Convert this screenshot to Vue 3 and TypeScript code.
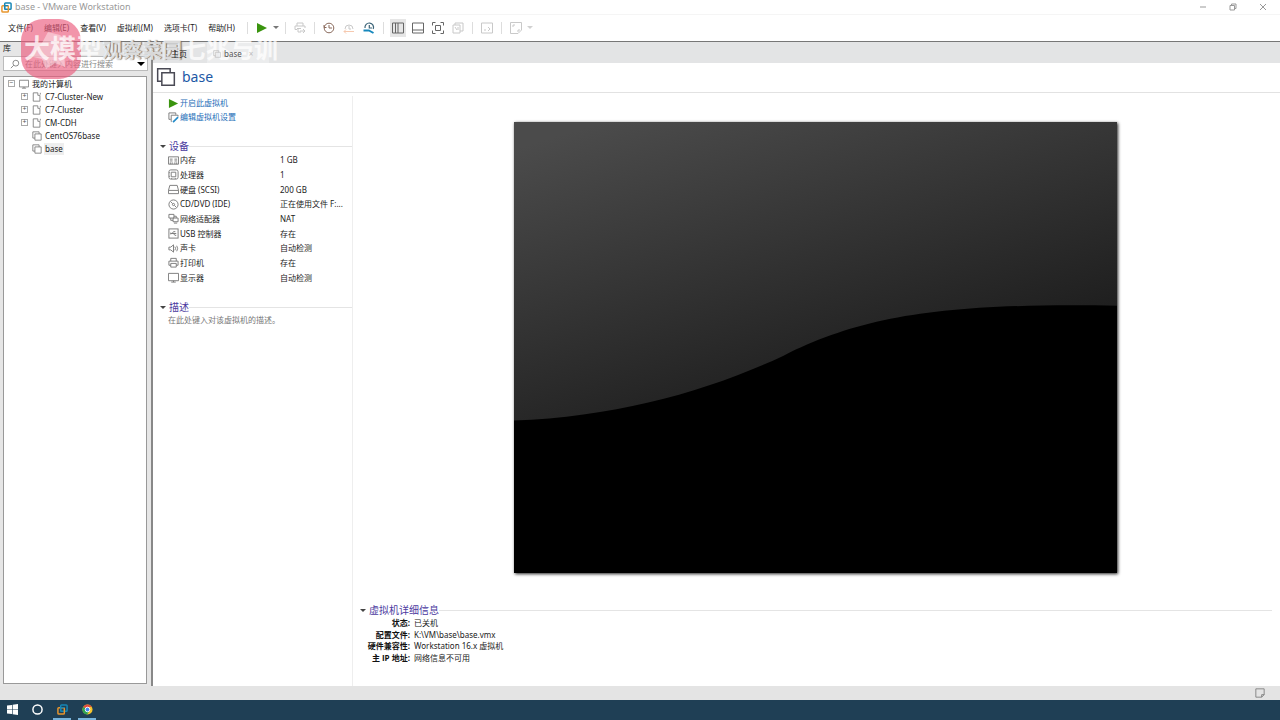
<script setup lang="ts">
import { ref } from 'vue'

interface Device { icon: string; name: string; value: string }
interface Node { name: string; icon: string; folder: boolean }

const menus: string[] = ['文件(F)', '编辑(E)', '查看(V)', '虚拟机(M)', '选项卡(T)', '帮助(H)']
const nodes: Node[] = [
  { name: 'C7-Cluster-New', icon: 'folder', folder: true },
  { name: 'C7-Cluster', icon: 'folder', folder: true },
  { name: 'CM-CDH', icon: 'folder', folder: true },
  { name: 'CentOS76base', icon: 'vm', folder: false },
  { name: 'base', icon: 'vm', folder: false },
]
const devices: Device[] = [
  { icon: 'memory', name: '内存', value: '1 GB' },
  { icon: 'cpu', name: '处理器', value: '1' },
  { icon: 'disk', name: '硬盘 (SCSI)', value: '200 GB' },
  { icon: 'cd', name: 'CD/DVD (IDE)', value: '正在使用文件 F:...' },
  { icon: 'net', name: '网络适配器', value: 'NAT' },
  { icon: 'usb', name: 'USB 控制器', value: '存在' },
  { icon: 'sound', name: '声卡', value: '自动检测' },
  { icon: 'printer', name: '打印机', value: '存在' },
  { icon: 'monitor', name: '显示器', value: '自动检测' },
]
const details: [string, string][] = [
  ['状态:', '已关机'],
  ['配置文件:', 'K:\\VM\\base\\base.vmx'],
  ['硬件兼容性:', 'Workstation 16.x 虚拟机'],
  ['主 IP 地址:', '网络信息不可用'],
]
const selected = ref('base')
const query = ref('')
</script>

<template>
  <div class="desktop">
    <svg class="defs" aria-hidden="true">
      <symbol id="logo" viewBox="0 0 12 12"><rect x="4" y="1" width="7" height="7" rx="1" fill="none" stroke="#1686b5" stroke-width="1.6" /><rect x="1" y="4" width="7" height="7" rx="1" fill="none" stroke="#e8962e" stroke-width="1.6" /><path d="M4 8V4h4" fill="none" stroke="#1686b5" stroke-width="1.4" /></symbol>
      <symbol id="vm" viewBox="0 0 12 12"><path d="M3.500 8.500H1V1H8.500V3.500M3.500 3.500H11V11H3.500Z" /></symbol>
      <symbol id="folder" viewBox="0 0 12 12"><path d="M7 1H1.500V11H9.500V4M7 1V4H9.500M10 1V3" /></symbol>
      <symbol id="monitor" viewBox="0 0 12 12"><path d="M.5 1.500H11.500V9.500H.5ZM3.500 11H8.500M6 9.500V11" /></symbol>
      <symbol id="memory" viewBox="0 0 12 12"><path d="M.5 2H11.500V10H.5ZM2 4.500H5M7 4.500H10M2 6.500H5M7 6.500H10M2.500 8V10M4.500 8V10M7.500 8V10M9.500 8V10" /></symbol>
      <symbol id="cpu" viewBox="0 0 12 12"><rect x="1" y="1" width="10" height="10" rx="2" /><path d="M3.500 3.500H8.500V8.500H3.500ZM1 4H2M1 8H2M4 10V11M8 10V11" /></symbol>
      <symbol id="disk" viewBox="0 0 12 12"><path d="M.5 7L2 1.500H10L11.500 7V10.500H.5ZM.5 7H11.500" /></symbol>
      <symbol id="cd" viewBox="0 0 12 12"><circle cx="6" cy="6" r="5" /><circle cx="6" cy="6" r="1.200" /><path d="M3 3L5 5M7 7L9 9" /></symbol>
      <symbol id="net" viewBox="0 0 12 12"><path d="M1 1.500H6.500V5.500H1ZM5.500 5.500H11V9.500H5.500ZM3 5.500V8H5.500M6.500 3.500H9V5.500M6.500 11H10" /></symbol>
      <symbol id="usb" viewBox="0 0 12 12"><rect x="1" y="1" width="10" height="10" /><path d="M3 6H9M4.500 6L6 4H8M6 6L7.500 8H9M3 5V7" /></symbol>
      <symbol id="sound" viewBox="0 0 12 12"><path d="M1 4.500H3L6 2V10L3 7.500H1ZM7.500 4Q9 6 7.500 8M9.500 3Q11.500 6 9.500 9" /></symbol>
      <symbol id="printer" viewBox="0 0 12 12"><path d="M3 4.500V1.500H9V4.500M3 9H1V4.500H11V9H9M3 7H9V11H3Z" /></symbol>
      <symbol id="edit" viewBox="0 0 12 12"><path d="M3 8H1V1H8.500V3M4 10.500H3.500V3.500H11V5" /><path d="M5.500 11L11 5.500" stroke="#238bc8" stroke-width="1.800" /></symbol>
      <symbol id="play" viewBox="0 0 12 12"><path d="M1 1L11 6L1 11Z" fill="#3a940f" stroke="none" /></symbol>
      <symbol id="clock" viewBox="0 0 12 12"><circle cx="6" cy="6" r="4.800" /><path d="M6 3V6H9M1 3V5.500H3.500" /></symbol>
      <symbol id="send" viewBox="0 0 12 12"><path d="M3 4V1H9V4M3 7.500H1V4H11V6M3 6.500H7M4 6.500V10H7M6 9H11M9 7L11 9L9 11" /></symbol>
      <symbol id="revert" viewBox="0 0 12 12"><path d="M2 7A4 4 0 0 1 10 7M6 4V7H8" /><path d="M1 9.500H11M3 7.500L1 9.500L3 11.500" stroke="#e8661c" /></symbol>
      <symbol id="manage" viewBox="0 0 12 12"><path d="M2 6A4.300 4.300 0 1 1 10.200 7M6.300 3V6H9" stroke="#3c6478" stroke-width="1.200" /><path d="M.5 8.500H6.500M6 8.500L10.500 11" stroke="#1688bd" stroke-width="2" /></symbol>
      <symbol id="sidebar" viewBox="0 0 12 12"><path d="M.5 1H11.500V11H.5ZM3.500 1V11M6 1V11" /></symbol>
      <symbol id="bottom" viewBox="0 0 12 12"><path d="M.5 1H11.500V11H.5ZM.5 8H11.500" /></symbol>
      <symbol id="full" viewBox="0 0 12 12"><path d="M3.500 3.500H8.500V8.500H3.500ZM.5 3.500V.5H3.500M8.500.5H11.500V3.500M11.500 8.500V11.500H8.500M3.500 11.500H.5V8.500" /></symbol>
      <symbol id="unity" viewBox="0 0 12 12"><path d="M1 3H8V11H1ZM3 3V1H11V9H8M3 5L5 8M6 5V8" /></symbol>
      <symbol id="console" viewBox="0 0 12 12"><path d="M.5 1H11.500V11H.5ZM3 8H5M7 5L9 7L7 9" /></symbol>
      <symbol id="stretch" viewBox="0 0 12 12"><path d="M8 11.500H.5V.5H11.500V8M3 5V3H5M7 9H9V7M8 11.500L11.500 8" /></symbol>
    </svg>
    <header class="title">
      <svg><use href="#logo" /></svg><span>base - VMware Workstation</span>
      <div class="window-buttons">
        <button aria-label="最小化"><svg viewBox="0 0 8 8"><path d="M1 4H7" /></svg></button>
        <button aria-label="还原"><svg viewBox="0 0 8 8"><path d="M1 2.500H5.500V7H1ZM2.500 2.500V1H7V5.500H5.500" /></svg></button>
        <button aria-label="关闭"><svg viewBox="0 0 8 8"><path d="M1 1L7 7M7 1L1 7" /></svg></button>
      </div>
    </header>
    <div class="menubar">
      <nav><button v-for="m in menus" :key="m">{{ m }}</button></nav>
      <div class="tools">
        <i></i><button aria-label="开启"><svg><use href="#play" /></svg></button><b></b>
        <i></i><button class="faint" aria-label="发送"><svg><use href="#send" /></svg></button>
        <i></i><button aria-label="拍摄快照" class="snap"><svg><use href="#clock" /></svg></button><button class="faint" aria-label="恢复快照"><svg><use href="#revert" /></svg></button><button aria-label="管理快照"><svg><use href="#manage" /></svg></button>
        <i></i><button class="active" aria-label="库"><svg><use href="#sidebar" /></svg></button><button aria-label="缩略图"><svg><use href="#bottom" /></svg></button><button aria-label="全屏"><svg><use href="#full" /></svg></button><button class="faint" aria-label="Unity"><svg><use href="#unity" /></svg></button>
        <i></i><button class="faint" aria-label="控制台"><svg><use href="#console" /></svg></button>
        <i></i><button class="faint" aria-label="拉伸"><svg><use href="#stretch" /></svg></button><b class="faint"></b>
      </div>
    </div>

    <main>
      <aside>
        <label class="lib" for="search">库</label>
        <div class="search">
          <svg viewBox="0 0 12 12"><circle cx="7" cy="5" r="3.500" /><path d="M4.500 7.500L1 11" /></svg>
          <input id="search" v-model="query" placeholder="在此处键入内容进行搜索"><b></b>
        </div>
        <div class="tree">
          <button class="root"><span class="expand">−</span><svg><use href="#monitor" /></svg><span>我的计算机</span></button>
          <button v-for="n in nodes" :key="n.name" class="child" @click="selected = n.name">
            <span :class="{ expand: n.folder, blank: !n.folder }">{{ n.folder ? '+' : '' }}</span>
            <svg><use :href="'#' + n.icon" /></svg><span :class="['label', { chosen: selected === n.name }]">{{ n.name }}</span>
          </button>
        </div>
      </aside>
      <section class="workspace">
        <div class="tabs"><button class="home">主页</button><button class="tab"><svg><use href="#vm" /></svg>base<span>×</span></button></div>
        <div class="heading"><svg><use href="#vm" /></svg><h1>base</h1></div>
        <div class="content">
          <div class="info">
            <div class="actions">
              <a href="#"><svg><use href="#play" /></svg>开启此虚拟机</a>
              <a href="#"><svg><use href="#edit" /></svg>编辑虚拟机设置</a>
            </div>
            <h2><b></b><span>设备</span></h2>
            <table><tbody><tr v-for="d in devices" :key="d.name">
              <th scope="row"><div><svg><use :href="'#' + d.icon" /></svg>{{ d.name }}</div></th><td>{{ d.value }}</td>
            </tr></tbody></table>
            <h2 class="second"><b></b><span>描述</span></h2>
            <p>在此处键入对该虚拟机的描述。</p>
          </div>
          <div class="view">
            <svg class="preview" viewBox="0 0 604 452" preserveAspectRatio="none" role="img" aria-label="虚拟机屏幕">
              <defs><linearGradient id="sheen" gradientUnits="userSpaceOnUse" x1="90" y1="0" x2="190" y2="330"><stop offset="0" stop-color="#4b4b4b" /><stop offset="1" stop-color="#1c1c1c" /></linearGradient></defs>
              <rect width="604" height="452" fill="url(#sheen)" />
              <path d="M0 299C105 295 195 269 270 234C350 194 430 181 604 184V452H0Z" fill="#000" />
            </svg>
            <div class="details">
              <h2><b></b><span>虚拟机详细信息</span></h2>
              <dl><template v-for="d in details" :key="d[0]"><dt>{{ d[0] }}</dt><dd>{{ d[1] }}</dd></template></dl>
            </div>
          </div>
        </div>
      </section>
      <div class="watermark"><div class="stamp"><svg viewBox="0 0 60 60"><path d="M8 37L21 24L27 13L39 16L51 27L43 30L44 48L34 44L25 50L21 40Z" fill="#fff" opacity=".4" /></svg></div><span class="mark">大模型<em>观察菜园</em><small>七兆与训</small></span></div>
    </main>
    <footer class="status"><svg viewBox="0 0 12 12"><path d="M1 1H11V8L8 11H1ZM8 11V8H11" /></svg></footer>
    <footer class="taskbar">
      <button aria-label="开始"><svg viewBox="0 0 12 12"><path d="M0 1.700L5.500 1V5.700H0ZM6.200.9L12 0V5.700H6.200ZM0 6.400H5.500V11L0 10.300ZM6.200 6.400H12V12L6.200 11.100Z" fill="#fff" stroke="none" /></svg></button>
      <button aria-label="搜索"><svg viewBox="0 0 12 12"><circle cx="6" cy="6" r="5" fill="none" stroke="#fff" stroke-width="1.600" /></svg></button>
      <button class="open" aria-label="VMware"><svg><use href="#logo" /></svg></button>
      <button class="open" aria-label="Chrome"><svg viewBox="0 0 12 12"><circle cx="6" cy="6" r="5.500" fill="#f7c52d" stroke="none" /><path d="M6 6L1.200 3.300A5.500 5.500 0 0 1 10.800 3.300H6Z" fill="#e34b3d" stroke="none" /><path d="M6 6L1.200 3.300A5.500 5.500 0 0 0 5.600 11.500L8.300 7.300Z" fill="#30a552" stroke="none" /><circle cx="6" cy="6" r="2.500" fill="#4285f4" stroke="#fff" /></svg></button>
    </footer>
  </div>
</template>

<style>
body { margin: 0; }
</style>
<style scoped>
* { box-sizing: border-box; }
.desktop { min-height: 100vh; display: flex; flex-direction: column; background: #fff; color: #222; font: 8px/12px "Noto Sans", "Noto Sans CJK SC", sans-serif; }
.defs { position: absolute; width: 0; height: 0; }
svg { width: 10px; height: 10px; flex: none; display: block; fill: none; stroke: #777; stroke-width: 1; }
button { border: 0; background: none; padding: 0; margin: 0; font: inherit; color: inherit; white-space: nowrap; }
b { width: 0; height: 0; flex: none; border: 3px solid transparent; border-top: 4px solid #444; border-bottom: 0; }
.title { height: 15px; display: flex; align-items: center; padding-left: 1px; gap: 3px; color: #999; border-bottom: 1px solid #f5f5f5; }
.title > svg { width: 11px; height: 11px; }
.title > span { font-size: 9px; }
.window-buttons { margin-left: auto; display: flex; gap: 22px; padding-right: 13px; }
.window-buttons svg { width: 8px; height: 8px; stroke: #999; }
.menubar { height: 27px; display: flex; align-items: center; border-bottom: 1px solid #777; padding: 0 0 1px 8px; }
nav { display: flex; gap: 11px; }
.tools { display: flex; align-items: center; margin-left: 6px; }
.tools i { width: 1px; height: 12px; background: #ddd; margin: 0 6px; }
.tools button { width: 16px; height: 18px; display: grid; place-items: center; }
.tools button + button { margin-left: 4px; }
.tools b { margin-left: 3px; border-top: 3px solid #777; }
.tools svg { width: 12px; height: 12px; stroke: #666; }
.tools .faint { opacity: .35; }
.tools .snap svg { stroke: #8a6a5c; }
.tools .active { background: #e6e6e6; }
main { position: relative; flex: 1; display: flex; }
aside { width: 151px; flex: none; display: flex; flex-direction: column; background: #e6e6e6; padding: 0 3px 2px; }
.lib { height: 14px; line-height: 12px; }
.search { height: 15px; border: 1px solid #bbb; background: #fff; display: flex; align-items: center; padding: 0 2px 0 6px; }
.search input { flex: 1; min-width: 0; border: 0; outline: 0; padding: 0 0 0 5px; background: none; font: inherit; color: #555; }
.search input::placeholder { color: #888; opacity: 1; }
.search b { border-top-color: #000; border-width: 4px 4px 0; }
.tree { flex: 1; margin: 5px 1px 0 0; border: 1px solid #999; background: #fff; padding: 0 4px; display: flex; flex-direction: column; }
.tree button { height: 13px; display: flex; align-items: center; }
.tree svg { margin: 0 3px 0 4px; }
.tree .child { margin-left: 13px; }
.tree .child svg { margin: 0 2px 0 4px; }
.expand { width: 7px; height: 7px; border: 1px solid #aaa; font-size: 7px; line-height: 4px; text-align: center; color: #555; }
.blank { width: 7px; }
.label { padding: 0 1px; }
.chosen { background: #eee; }
.workspace { flex: 1; min-width: 0; border-left: 2px solid #888; display: flex; flex-direction: column; }
.tabs { height: 21px; background: #e3e4e5; display: flex; align-items: stretch; padding-left: 18px; }
.home, .tab { position: relative; z-index: 2; padding-top: 3px; }
.tab { background: rgba(255, 255, 255, .3); display: flex; align-items: center; gap: 3px; width: 62px; margin-left: 20px; padding-left: 6px; color: #555; }
.tab svg { width: 8px; stroke: #bbb; }
.tab span { margin-left: 4px; color: #bbb; }
.heading { height: 30px; border-bottom: 1px solid #e2e2e2; display: flex; align-items: center; gap: 6px; padding: 0 0 2px 3px; }
.heading svg { width: 20px; height: 20px; stroke: #4a4a55; stroke-width: .9; }
h1 { margin: 0; font-size: 14px; line-height: 20px; font-weight: 400; color: #1c58a5; }
.content { flex: 1; display: flex; padding-right: 2px; }
.info { width: 200px; flex: none; border-right: 1px solid #eee; margin-top: 3px; padding-left: 7px; }
.info svg { width: 11px; height: 11px; }
.actions { padding-left: 8px; }
.actions a { height: 14px; display: flex; align-items: center; gap: 1px; color: #1e6eb8; text-decoration: none; }
h2 { margin: 0; display: flex; align-items: center; font-size: 10px; line-height: 14px; font-weight: 400; color: #4b3aa0; gap: 3px; }
h2 b { border-top-width: 3px; }
h2::after { content: ""; height: 1px; background: #e4e4e4; flex: 1; margin-left: -3px; }
.actions + h2 { margin-top: 15px; }
table { width: 100%; height: 132px; border-collapse: collapse; table-layout: fixed; }
th, td { padding: 0; font-weight: 400; text-align: left; white-space: nowrap; line-height: 12px; }
th { width: 120px; padding-left: 8px; }
th div { display: flex; align-items: center; gap: 1px; }
.second { margin-top: 15px; }
.info p { margin: 0 0 0 8px; color: #777; }
.view { flex: 1; min-width: 0; display: flex; flex-direction: column; align-items: center; padding-top: 29px; }
.preview { width: 65.2%; height: auto; aspect-ratio: 604 / 452; stroke: none; box-shadow: 1px 1px 3px #222; }
.details { align-self: stretch; padding: 0 6px 0 7px; margin: auto 0 23px; }
dl { margin: 0; height: 46px; display: grid; grid-template-columns: 50px 1fr; grid-template-rows: repeat(4, 1fr); column-gap: 4px; line-height: 11px; }
dt { font-family: "Open Sans", "Noto Sans CJK SC", sans-serif; font-weight: 700; text-align: right; white-space: nowrap; color: #111; }
dd { margin: 0; }
.watermark { position: absolute; left: 21px; top: -23px; display: flex; align-items: center; pointer-events: none; }
.stamp { width: 60px; height: 60px; border-radius: 22px; background: rgba(235, 91, 124, .65); }
.stamp svg { width: 60px; height: 60px; stroke: none; }
.mark { margin-left: -57px; font-size: 26px; line-height: 30px; white-space: nowrap; color: rgba(255, 255, 255, .75); position: relative; font-weight: 700; }
.mark em { font-style: normal; font-size: 20px; text-shadow: 1px 0 1px #666; }
.mark small { font-size: 24px; }
.status { height: 14px; background: #e4e4e4; display: flex; align-items: center; justify-content: flex-end; padding-right: 15px; }
.taskbar { height: 20px; background: #1f3f55; display: flex; padding-left: 3px; gap: 7px; }
.taskbar button { width: 18px; display: grid; place-items: center; border-bottom: 2px solid transparent; }
.taskbar svg { width: 11px; height: 11px; }
.taskbar .open { border-bottom-color: #78b4dc; }
</style>
